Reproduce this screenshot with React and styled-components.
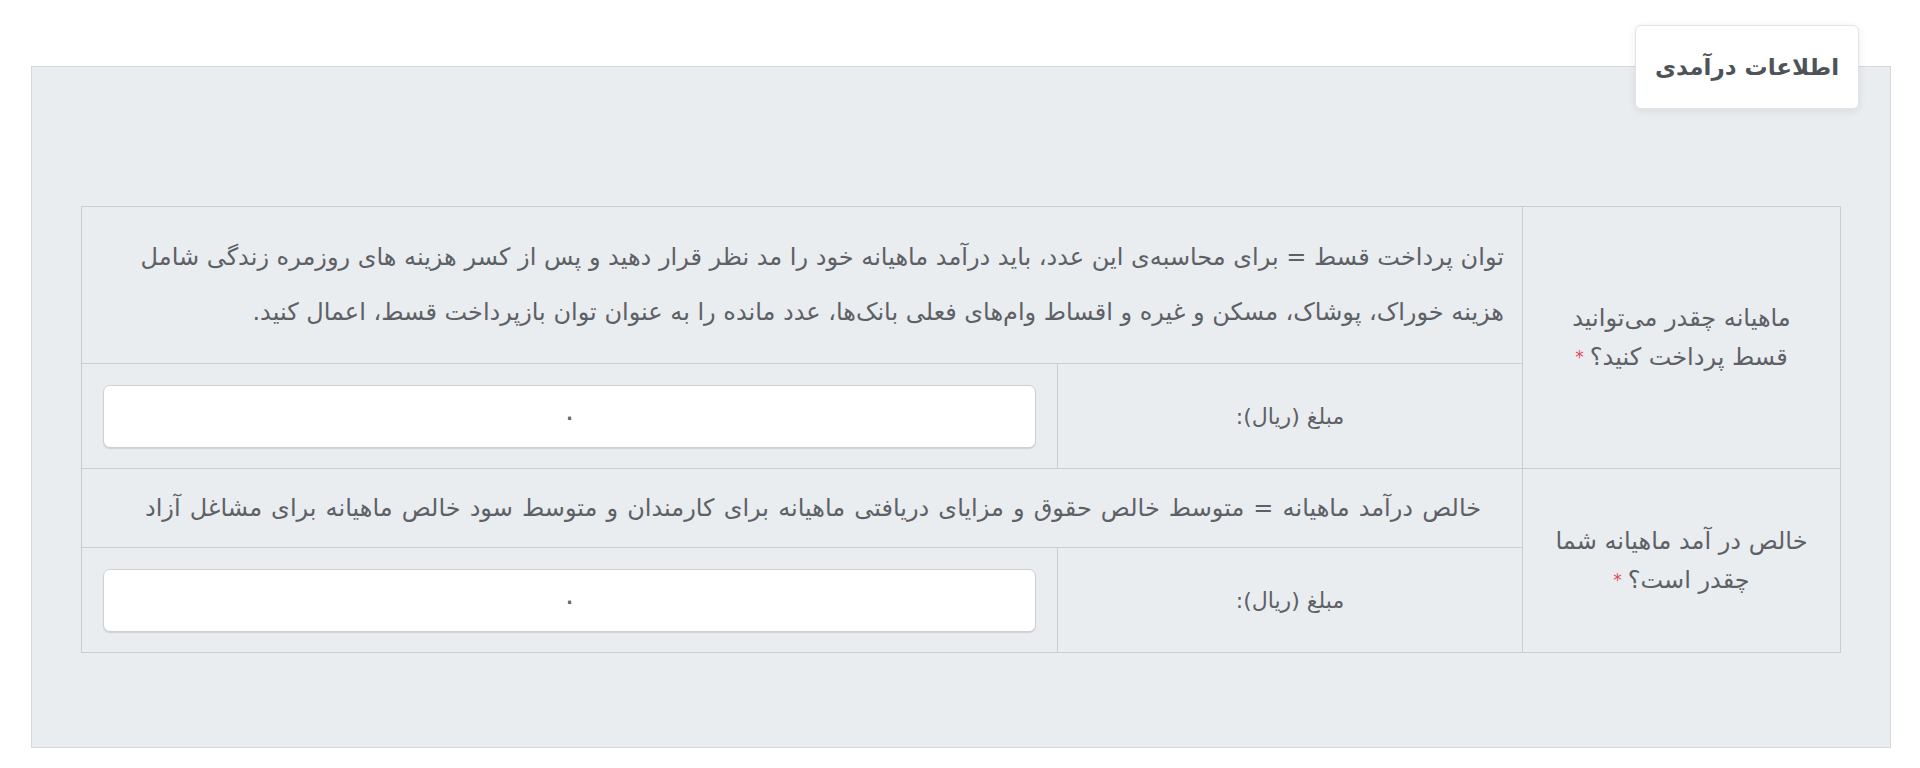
import React from "react";
import styled, { createGlobalStyle } from "styled-components";

const GlobalStyle = createGlobalStyle`
  html, body {
    margin: 0;
    padding: 0;
    background: #ffffff;
  }
  body {
    font-family: "DejaVu Sans", "Noto Sans", sans-serif;
  }
`;

const Page = styled.div`
  direction: rtl;
  padding: 66px 29px 21px 31px;
`;

const Panel = styled.section`
  position: relative;
  background-color: #eaedf0;
  border: 1px solid #d5d9dc;
  padding: 139px 49px 94px 49px;
`;

const PanelTitle = styled.div`
  position: absolute;
  top: -42px;
  right: 31px;
  width: 224px;
  height: 84px;
  box-sizing: border-box;
  display: flex;
  align-items: center;
  justify-content: center;
  background: #ffffff;
  border: 1px solid #e1e3e5;
  border-radius: 6px;
  box-shadow: 0 2px 8px rgba(0, 0, 0, 0.08);
  font-size: 23px;
  font-weight: 700;
  color: #4e5358;
`;

const Table = styled.table`
  width: 100%;
  border-collapse: collapse;
  table-layout: fixed;
`;

const Cell = styled.td`
  border: 1px solid #c9cdd1;
  padding: 0;
  vertical-align: middle;
  color: #5d6166;
`;

const QuestionCell = styled(Cell)`
  text-align: center;
  line-height: 39px;
  font-size: 24px;
  padding: 0 20px;
`;

const Required = styled.span`
  color: #e0485a;
  font-size: 17px;
  margin-right: 6px;
  vertical-align: 2px;
`;

const DescCell = styled(Cell)`
  height: ${({ h }) => h}px;
  line-height: 55px;
  font-size: 24px;
  padding: ${({ align }) => (align === "center" ? "0 18px 0 40px" : "0 18px")};
  text-align: ${({ align }) => align || "right"};
  word-spacing: ${({ align }) => (align === "center" ? "1.5px" : "0")};
  white-space: nowrap;
`;

const LabelCell = styled(Cell)`
  text-align: center;
  font-size: 22px;
`;

const InputCell = styled(Cell)`
  height: 104px;
  padding: 0 21px;
`;

const AmountInput = styled.input`
  display: block;
  width: 100%;
  height: 63px;
  box-sizing: border-box;
  border: 1px solid #cdd1d5;
  border-radius: 7px;
  background: #ffffff;
  box-shadow: 0 1px 1px rgba(0, 0, 0, 0.12);
  text-align: center;
  font-family: "DejaVu Sans", sans-serif;
  font-size: 28px;
  color: #666;
  outline: none;
`;

const questions = [
  {
    id: "installment",
    lines: ["ماهیانه چقدر می‌توانید", "قسط پرداخت کنید؟"],
    desc: [
      "توان پرداخت قسط = برای محاسبه‌ی این عدد، باید درآمد ماهیانه خود را مد نظر قرار دهید و پس از کسر هزینه های روزمره زندگی شامل",
      "هزینه خوراک، پوشاک، مسکن و غیره و اقساط وام‌های فعلی بانک‌ها، عدد مانده را به عنوان توان بازپرداخت قسط، اعمال کنید.",
    ],
    descHeight: 156,
    align: "right",
  },
  {
    id: "income",
    lines: ["خالص در آمد ماهیانه شما", "چقدر است؟"],
    desc: [
      "خالص درآمد ماهیانه = متوسط خالص حقوق و مزایای دریافتی ماهیانه برای کارمندان و متوسط سود خالص ماهیانه برای مشاغل آزاد",
    ],
    descHeight: 78,
    align: "center",
  },
];

const App = () => {
  return (
    <Page>
      <GlobalStyle />
      <Panel>
        <PanelTitle>اطلاعات درآمدی</PanelTitle>
        <Table>
          <colgroup>
            <col style={{ width: "318px" }} />
            <col style={{ width: "465px" }} />
            <col />
          </colgroup>
          <tbody>
            {questions.map((q) => (
              <React.Fragment key={q.id}>
                <tr>
                  <QuestionCell rowSpan={2}>
                    {q.lines[0]}
                    <br />
                    {q.lines[1]}
                    <Required>*</Required>
                  </QuestionCell>
                  <DescCell colSpan={2} h={q.descHeight} align={q.align}>
                    {q.desc.map((line, i) => (
                      <React.Fragment key={i}>
                        {i > 0 && <br />}
                        {line}
                      </React.Fragment>
                    ))}
                  </DescCell>
                </tr>
                <tr>
                  <LabelCell>مبلغ (ریال):</LabelCell>
                  <InputCell>
                    <AmountInput type="text" defaultValue="۰" />
                  </InputCell>
                </tr>
              </React.Fragment>
            ))}
          </tbody>
        </Table>
      </Panel>
    </Page>
  );
};

export default App;
